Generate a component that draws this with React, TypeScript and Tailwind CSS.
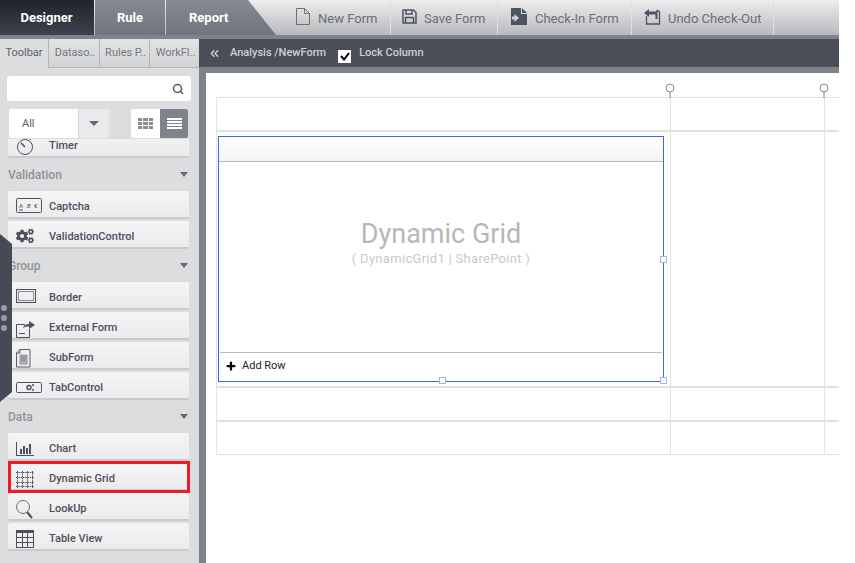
import type { ReactNode } from "react";
import { ChevronsLeft, Plus, Search } from "lucide-react";
import { FaCogs } from "react-icons/fa";

const INK = "#4c4f5c";

function TimerIcon() {
  return (
    <svg width="18" height="20" viewBox="0 0 18 20" fill="none" stroke={INK} strokeWidth="1">
      <circle cx="9" cy="11" r="7.5" />
      <path d="M5 7l4 4" strokeWidth="1.6" />
      <path d="M13 2l2 2" />
    </svg>
  );
}

function CaptchaIcon() {
  return (
    <svg width="27" height="16" viewBox="0 0 27 16" fill="none" className="-translate-y-[1px]">
      <rect x="0.5" y="0.5" width="25" height="14" rx="1" stroke={INK} />
      <text x="3" y="10" fontSize="6" fill={INK} fontFamily="Roboto, sans-serif">A</text>
      <text x="11" y="10" fontSize="6" fontStyle="italic" fill={INK} fontFamily="Roboto, sans-serif">B</text>
      <text x="18" y="10" fontSize="6" fill={INK} fontFamily="Roboto, sans-serif">€</text>
      <path d="M3 12h4" stroke={INK} />
    </svg>
  );
}

function BorderIcon() {
  return (
    <svg width="21" height="15" viewBox="0 0 21 15" fill="none" stroke={INK} className="-translate-y-[2px]">
      <rect x="0.5" y="0.5" width="19" height="13" />
      <rect x="2.5" y="2.5" width="15" height="9" stroke="#8a8d96" />
    </svg>
  );
}

function ExternalIcon() {
  return (
    <svg width="20" height="19" viewBox="0 0 20 19" fill="none" stroke={INK}>
      <path d="M9 5.5H0.5v13h13V10" />
      <path d="M3 14.5h6" />
      <path d="M7 9c1-3 3-4 6-4V2l6 4-6 4V7.500c-3 0-4 0-6 1.500z" fill={INK} stroke="none" />
    </svg>
  );
}

function SubFormIcon() {
  return (
    <svg width="15" height="19" viewBox="0 0 15 19" fill="none" stroke={INK} strokeWidth="0.9">
      <path d="M4 0.500h10v17.500H0.500V4z" />
      <path d="M4 0.500V4H0.500" />
      <rect x="4" y="6" width="7" height="9" fill="#b8bac0" stroke="#8a8d96" />
      <path d="M5 8h5M5 10h5M5 12h5" stroke="#70737c" />
    </svg>
  );
}

function TabIcon() {
  return (
    <svg width="27" height="13" viewBox="0 0 27 13" fill="none" className="-translate-y-[1px]">
      <rect x="0.500" y="1.500" width="25" height="10" rx="1" stroke={INK} />
      <circle cx="13" cy="6.500" r="2" stroke={INK} strokeWidth="1.400" />
      <circle cx="17" cy="4" r="1" fill={INK} />
      <circle cx="17" cy="9" r="1" fill={INK} />
    </svg>
  );
}

function ChartIcon() {
  return (
    <svg width="19" height="14" viewBox="0 0 19 14" fill={INK}>
      <rect x="0" y="0" width="1" height="13" />
      <rect x="0" y="13" width="18" height="1" />
      <rect x="4" y="7" width="2" height="5" />
      <rect x="7" y="4" width="2" height="8" />
      <rect x="10" y="6" width="2" height="6" />
      <rect x="13" y="2" width="2" height="10" />
    </svg>
  );
}

function GridIcon() {
  return (
    <svg width="18" height="17" viewBox="0 0 18 17" fill="none" stroke={INK} strokeDasharray="1.500 0.800">
      <path d="M0 1.500h18M0 6.500h18M0 11.500h18M0 15.500h18" />
      <path d="M1.500 0v17M6.500 0v17M11.500 0v17M16.500 0v17" />
    </svg>
  );
}

function LookupIcon() {
  return (
    <svg width="17" height="19" viewBox="0 0 17 19" fill="none" stroke={INK}>
      <circle cx="7" cy="7" r="6.500" stroke="#6a6d78" />
      <path d="M11 12l5 6" strokeWidth="2" />
    </svg>
  );
}

function TableIcon() {
  return (
    <svg width="18" height="18" viewBox="0 0 18 18" fill="none" stroke={INK}>
      <rect x="0.500" y="0.500" width="17" height="17" />
      <rect x="0" y="0" width="18" height="3" fill={INK} stroke="none" />
      <path d="M0 7.500h18M0 12.500h18M6.500 3v15M11.500 3v15" />
    </svg>
  );
}

function NewFormIcon() {
  return (
    <svg width="14" height="17" viewBox="0 0 14 17" fill="none" stroke="#6d7078">
      <path d="M0.500 0.500h8l5 5v11h-13z" />
      <path d="M8.500 0.500v5h5" />
    </svg>
  );
}

function SaveIcon() {
  return (
    <svg width="15" height="15" viewBox="0 0 15 15" fill="none" stroke="#4e5360" strokeWidth="1.500">
      <path d="M1 1h10.500L14 3.500V14H1z" />
      <path d="M4 1v4h6V1" />
      <path d="M3.500 14V8.500h8V14" />
    </svg>
  );
}

function CheckInIcon() {
  return (
    <svg width="16" height="17" viewBox="0 0 16 17">
      <path d="M0 0h10v6h6v11H0z" fill="#4e5360" />
      <path d="M11 0l5 5h-5z" fill="#4e5360" />
      <path d="M1 8.500h2.500V6L8 10l-4.500 4v-2.500H1z" fill="#d0d1d4" />
    </svg>
  );
}

function UndoIcon() {
  return (
    <svg width="17" height="16" viewBox="0 0 17 16" fill="none">
      <path d="M2.500 7v8h13V3q0-1-1-1H12" stroke="#4e5360" strokeWidth="1.300" />
      <path d="M0 4l5-4v2.500h8.500V10h-2V5.500H5V8z" fill="#4e5360" />
    </svg>
  );
}

function ToolButton({
  width,
  pad,
  slot,
  icon,
  label,
}: {
  width: string;
  pad: string;
  slot: string;
  icon: ReactNode;
  label: string;
}) {
  return (
    <div className={`flex h-full items-center border-r border-[#dfe0e2] ${width} ${pad}`}>
      <span className={`flex shrink-0 -translate-y-[1px] ${slot}`}>{icon}</span>
      <span className="translate-y-[1px] text-[13px] text-[#6b6e77]">{label}</span>
    </div>
  );
}

function Header() {
  return (
    <div className="flex h-[35px] bg-gradient-to-b from-[#eeeeef] to-[#b8b9bc]">
      <div className="flex h-full w-[94px] items-center justify-center bg-gradient-to-b from-[#1e232d] to-[#3d424c] pr-[1px] text-[13px] font-bold text-white">
        Designer
      </div>
      <div className="ml-[1px] flex h-full w-[70px] items-center justify-center bg-gradient-to-b from-[#868a93] to-[#70747d] text-[13px] font-bold text-white">
        Rule
      </div>
      <div className="ml-[1px] flex h-full w-[110px] items-center bg-gradient-to-b from-[#868a93] to-[#70747d] pl-[23px] text-[13px] font-bold text-white [clip-path:polygon(0_0,82px_0,110px_100%,0_100%)]">
        Report
      </div>
      <ToolButton width="w-[115px]" pad="pl-[20px]" slot="w-[22px]" icon={<NewFormIcon />} label="New Form" />
      <ToolButton width="w-[107px]" pad="pl-[11px]" slot="w-[22px]" icon={<SaveIcon />} label="Save Form" />
      <ToolButton width="w-[134px]" pad="pl-[13px]" slot="w-[24px]" icon={<CheckInIcon />} label="Check-In Form" />
      <ToolButton width="w-[142px]" pad="pl-[12px]" slot="w-[24px]" icon={<UndoIcon />} label="Undo Check-Out" />
    </div>
  );
}

function Tab({ label, active, width }: { label: string; active?: boolean; width: string }) {
  return (
    <div
      className={`flex h-full items-center justify-center text-[11px] ${width} ${
        active
          ? "bg-[#dcddde] text-[#5d6068]"
          : "border-b border-l border-[#b3b5b8] bg-gradient-to-b from-[#e2e3e4] to-[#d2d3d5] pl-[2px] text-[#75787f]"
      }`}
    >
      {label}
    </div>
  );
}

function Item({ icon, label, marked }: { icon: ReactNode; label: string; marked?: boolean }) {
  return (
    <div className="relative mb-[2px] flex h-[28px] items-center rounded-[2px] border-b-2 border-[#c9cacc] bg-gradient-to-b from-[#f5f5f6] to-[#ebebed] pt-[6px]">
      <span className="flex w-[41px] shrink-0 items-center pl-[8px]">{icon}</span>
      <span className="text-[11px] font-medium text-[#4c4f5c]">{label}</span>
      {marked && (
        <span className="absolute -top-[2px] -right-[1px] -bottom-[4px] left-0 border-[3px] border-[#ed1c24]" />
      )}
    </div>
  );
}

function GroupTitle({ label }: { label: string }) {
  return (
    <div className="flex h-[31px] items-center justify-between pr-[1px] pb-[2px]">
      <span className="text-[12px] font-medium text-[#8f9298]">{label}</span>
      <span className="h-0 w-0 border-x-[4px] border-t-[5px] border-x-transparent border-t-[#666a72]" />
    </div>
  );
}

function Sidebar() {
  return (
    <div className="relative flex w-[199px] shrink-0 flex-col bg-[#dcddde]">
      <div className="flex h-[29px]">
        <Tab label="Toolbar" active width="w-[48px]" />
        <Tab label="Dataso.." width="w-[51px]" />
        <Tab label="Rules P.." width="w-[50px]" />
        <Tab label="WorkFl.." width="w-[50px]" />
      </div>
      <div className="mt-[8px] ml-[7px] flex h-[25px] w-[184px] items-center justify-end rounded-[3px] bg-white pr-[7px]">
        <Search size={12} strokeWidth={3} color="#555a64" />
      </div>
      <div className="mt-[8px] ml-[9px] flex h-[29px]">
        <div className="flex h-full w-[100px] overflow-hidden rounded-[2px] bg-white">
          <span className="flex w-[69px] items-center pt-[2px] pl-[13px] text-[11px] text-[#5a5d66]">All</span>
          <span className="flex w-[31px] items-center justify-center border-l border-[#d5d6d8] bg-[#e9eaeb]">
            <span className="h-0 w-0 border-x-[5px] border-t-[5px] border-x-transparent border-t-[#666a72]" />
          </span>
        </div>
        <div className="ml-[22px] flex h-full w-[57px] overflow-hidden rounded-[2px] bg-white">
          <span className="flex w-[29px] items-center justify-center">
            <svg width="15" height="11" viewBox="0 0 15 11" fill="#8a8d94">
              <path d="M0 0h4v3H0zM5 0h5v3H5zM11 0h4v3h-4zM0 4h4v3H0zM5 4h5v3H5zM11 4h4v3h-4zM0 8h4v3H0zM5 8h5v3H5zM11 8h4v3h-4z" />
            </svg>
          </span>
          <span className="flex flex-1 items-center justify-center bg-[#7f838c]">
            <svg width="15" height="11" viewBox="0 0 15 11" fill="#fff">
              <path d="M0 0h15v2H0zM0 3h15v2H0zM0 6h15v2H0zM0 9h15v2H0z" />
            </svg>
          </span>
        </div>
      </div>
      <div className="mt-[1px] min-h-0 flex-1 overflow-hidden pr-[10px] pl-[8px]">
        <div className="-mt-[9px]">
          <Item icon={<TimerIcon />} label="Timer" />
          <GroupTitle label="Validation" />
          <Item icon={<CaptchaIcon />} label="Captcha" />
          <Item icon={<FaCogs size={18} color={INK} className="-translate-y-[1px]" />} label="ValidationControl" />
          <GroupTitle label="Group" />
          <Item icon={<BorderIcon />} label="Border" />
          <Item icon={<ExternalIcon />} label="External Form" />
          <Item icon={<SubFormIcon />} label="SubForm" />
          <Item icon={<TabIcon />} label="TabControl" />
          <GroupTitle label="Data" />
          <Item icon={<ChartIcon />} label="Chart" />
          <Item icon={<GridIcon />} label="Dynamic Grid" marked />
          <Item icon={<LookupIcon />} label="LookUp" />
          <Item icon={<TableIcon />} label="Table View" />
        </div>
      </div>
      {/* flap that folds the panel away */}
      <div className="absolute top-[195px] left-0 flex h-[168px] w-[12px] flex-col justify-center gap-[4px] bg-[#454a55] pl-[1px] [clip-path:polygon(0_0,100%_10px,100%_158px,0_100%)]">
        <span className="h-[6px] w-[6px] rounded-full bg-[#9a9da4]" />
        <span className="h-[6px] w-[6px] rounded-full bg-[#9a9da4]" />
        <span className="h-[6px] w-[6px] rounded-full bg-[#9a9da4]" />
      </div>
    </div>
  );
}

function Handle({ className }: { className: string }) {
  return <span className={`absolute h-[7px] w-[7px] border border-[#9db6ee] bg-white ${className}`} />;
}

function GridWidget() {
  return (
    <div className="relative flex h-[246px] w-[446px] flex-col border border-[#3f66d6] bg-white">
      <div className="h-[25px] border-b border-[#bcbcbc] bg-gradient-to-b from-white to-[#f3f3f3]" />
      <div className="flex flex-1 flex-col items-center pt-[56px]">
        <div className="text-[27px] leading-[32px] text-[#b7b7b7]">Dynamic Grid</div>
        <div className="mt-[1px] text-[13px] leading-[15px] tracking-[0.3px] text-[#c9c9c9]">( DynamicGrid1 | SharePoint )</div>
      </div>
      <div className="mx-[1px] flex h-[29px] items-center border-t border-[#bcbcbc] pb-[2px] pl-[5px]">
        <Plus size={12} strokeWidth={4.500} color="#000" />
        <span className="ml-[5px] text-[11px] text-[#222]">Add Row</span>
      </div>
      <Handle className="top-[119px] -right-[4px]" />
      <Handle className="-bottom-[3px] left-[220px]" />
      <Handle className="-right-[4px] -bottom-[3px]" />
    </div>
  );
}

function Pin({ className }: { className: string }) {
  return (
    <svg width="10" height="15" viewBox="0 0 10 15" fill="none" stroke="#85888e" className={`absolute top-[-15px] ${className}`}>
      <circle cx="5" cy="5" r="4" />
      <path d="M5 9v6" />
    </svg>
  );
}

function Row({ h, border, children }: { h: string; border: string; children?: ReactNode }) {
  return (
    <div className={`flex ${h} ${border} border-[#e1e1e1]`}>
      <div className="w-[455px] border-x border-[#e1e1e1] pt-[4px] pl-[1px]">{children}</div>
      <div className="w-[154px] border-r border-[#e1e1e1]" />
    </div>
  );
}

function Canvas() {
  return (
    <div className="min-w-0 flex-1">
      <div className="flex h-[28px] items-center bg-[#4a4e57] pl-[9px] text-[11px] font-medium text-[#cfd0d4]">
        <ChevronsLeft size={13} color="#cfd1d4" strokeWidth={2.5} />
        <span className="ml-[9px]">Analysis /NewForm</span>
        <span className="mt-[7px] ml-[12px] flex h-[13px] w-[13px] items-center justify-center bg-white">
          <svg width="10" height="9" viewBox="0 0 10 9" fill="none" stroke="#000" strokeWidth="2">
            <path d="M1 4l3 3.500L9 1" />
          </svg>
        </span>
        <span className="ml-[8px]">Lock Column</span>
      </div>
      <div className="h-[6px] bg-[#7f8389]" />
      <div className="flex h-[490px] bg-white">
        <div className="w-[7px] shrink-0 bg-[#7f8389]" />
        <div className="relative mt-[24px] ml-[10px] h-fit w-[623px] border-t border-[#e1e1e1]">
          <Pin className="left-[449px]" />
          <Pin className="left-[603px]" />
          <Row h="h-[34px]" border="border-b-2" />
          <Row h="h-[256px]" border="border-b-2">
            <GridWidget />
          </Row>
          <Row h="h-[34px]" border="border-b-2" />
          <Row h="h-[33px]" border="border-b" />
        </div>
      </div>
    </div>
  );
}

export default function App() {
  return (
    <div className="h-[563px] w-[855px] overflow-hidden bg-white font-['Roboto',sans-serif]">
      <div className="w-[839px]">
        <Header />
        <div className="h-[4px] bg-[#808389]" />
        <div className="flex h-[524px]">
          <Sidebar />
          <Canvas />
        </div>
      </div>
    </div>
  );
}
